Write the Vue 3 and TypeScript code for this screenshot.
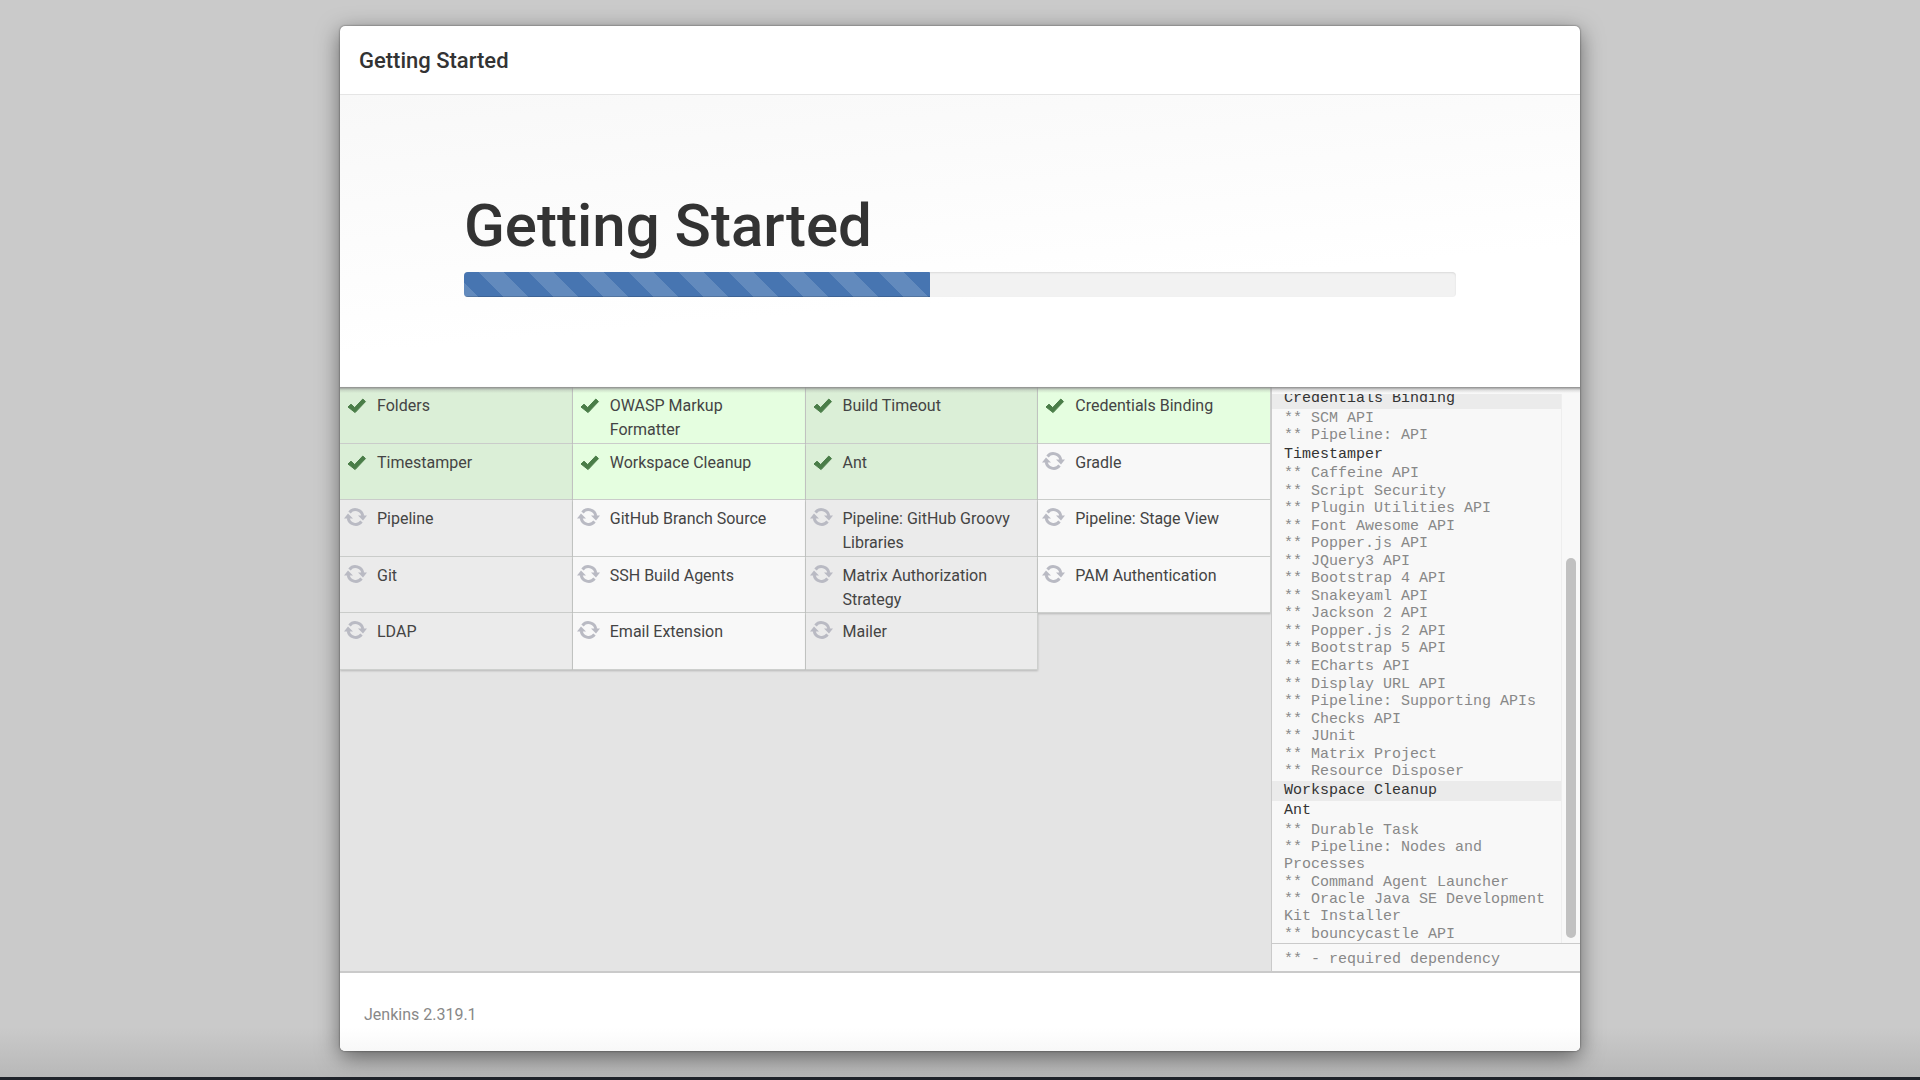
<script setup lang="ts">
type State = 'success' | 'pending'
interface Plugin { name: string; state: State }
interface LogLine { text: string; kind: 'heading' | 'dependency'; shaded?: boolean }

const plugin = (name: string, state: State = 'pending'): Plugin => ({ name, state })

const plugins: Plugin[] = [
  plugin('Folders', 'success'),
  plugin('OWASP Markup Formatter', 'success'),
  plugin('Build Timeout', 'success'),
  plugin('Credentials Binding', 'success'),
  plugin('Timestamper', 'success'),
  plugin('Workspace Cleanup', 'success'),
  plugin('Ant', 'success'),
  plugin('Gradle'),
  plugin('Pipeline'),
  plugin('GitHub Branch Source'),
  plugin('Pipeline: GitHub Groovy Libraries'),
  plugin('Pipeline: Stage View'),
  plugin('Git'),
  plugin('SSH Build Agents'),
  plugin('Matrix Authorization Strategy'),
  plugin('PAM Authentication'),
  plugin('LDAP'),
  plugin('Email Extension'),
  plugin('Mailer'),
]

const heading = (text: string, shaded = false): LogLine => ({ text, kind: 'heading', shaded })
const deps = (...names: string[]): LogLine[] =>
  names.map((n) => ({ text: `** ${n}`, kind: 'dependency' }))

const log: LogLine[] = [
  heading('Credentials Binding', true),
  ...deps('SCM API', 'Pipeline: API'),
  heading('Timestamper'),
  ...deps(
    'Caffeine API', 'Script Security', 'Plugin Utilities API', 'Font Awesome API',
    'Popper.js API', 'JQuery3 API', 'Bootstrap 4 API', 'Snakeyaml API', 'Jackson 2 API',
    'Popper.js 2 API', 'Bootstrap 5 API', 'ECharts API', 'Display URL API',
    'Pipeline: Supporting APIs', 'Checks API', 'JUnit', 'Matrix Project', 'Resource Disposer',
  ),
  heading('Workspace Cleanup', true),
  heading('Ant'),
  ...deps(
    'Durable Task', 'Pipeline: Nodes and Processes', 'Command Agent Launcher',
    'Oracle Java SE Development Kit Installer', 'bouncycastle API',
  ),
]

const progress = 47
</script>

<template>
  <div class="page">
    <main class="dialog">
      <header class="titlebar"><h4>Getting Started</h4></header>

      <section class="hero">
        <h1>Getting Started</h1>
        <div class="progress" role="progressbar" aria-label="Installation progress" :aria-valuenow="progress" aria-valuemin="0" aria-valuemax="100">
          <div class="bar" :style="{ width: progress + '%' }"></div>
        </div>
      </section>

      <section class="install">
        <div class="plugins">
          <ul class="grid">
            <li v-for="p in plugins" :key="p.name" class="plugin" :class="p.state">
              <svg v-if="p.state === 'success'" class="icon" viewBox="0 0 24 24" aria-hidden="true">
                <path d="M4 13 7 10.200 10.700 13.600 18.800 5 21.500 7.600 11.100 18.600Z" fill="#4a7d48" stroke="#4a7d48" stroke-width="1" stroke-linejoin="round" />
              </svg>
              <svg v-else class="icon" viewBox="0 0 24 24" aria-hidden="true">
                <g fill="none" stroke="#b9bac3" stroke-width="3">
                  <path d="M5.500 5.500A7.500 7.500 0 0 1 18.800 9" />
                  <path d="M17.500 14.500A7.500 7.500 0 0 1 4.200 11" />
                </g>
                <path d="M14 8.500H23L19 13.500Z M0 11.500H9L4 6.500Z" fill="#b9bac3" />
              </svg>
              <span>{{ p.name }}</span>
            </li>
          </ul>
        </div>

        <aside class="console">
          <div class="scroller">
            <div class="viewport">
              <ul class="log">
                <li v-for="line in log" :key="line.text" :class="[line.kind, { shaded: line.shaded }]">{{ line.text }}</li>
              </ul>
            </div>
            <div class="track"><div class="thumb"></div></div>
          </div>
          <p class="legend">** - required dependency</p>
        </aside>
      </section>

      <footer class="footer">Jenkins 2.319.1</footer>
    </main>
  </div>
</template>

<style>
body {
  margin: 0;
}
</style>

<style scoped>
.page {
  box-sizing: border-box;
  min-height: 100vh;
  padding: 26px 24px;
  display: flex;
  justify-content: center;
  background: linear-gradient(to bottom, #cacaca calc(100% - 50px), #b8b8b8 100%);
  border-bottom: 3px solid #20242b;
  font-family: Roboto, "Liberation Sans", sans-serif;
  color: #333;
}

.dialog {
  display: flex;
  flex-direction: column;
  width: 100%;
  max-width: 1240px;
  overflow: hidden;
  border-radius: 5px;
  background: #fff;
  box-shadow: 0 0 2px rgba(0, 0, 0, 0.6), 0 6px 22px rgba(0, 0, 0, 0.5);
}

.titlebar {
  box-sizing: border-box;
  height: 69px;
  padding: 2px 19px 0;
  display: flex;
  align-items: center;
  border-bottom: 1px solid #e5e5e5;
}

h4 {
  margin: 0;
  font-size: 22px;
  font-weight: 500;
  line-height: 28px;
}

.hero {
  box-sizing: border-box;
  height: 292px;
  padding: 97px 10% 0;
  background: linear-gradient(175deg, #f8f8f8, #fff 65%);
}

h1 {
  margin: 0 0 12px;
  font-size: 60px;
  font-weight: 500;
  line-height: 68px;
}

.progress {
  height: 25px;
  overflow: hidden;
  border-radius: 4px;
  background: #f2f2f2;
  box-shadow: inset 0 1px 2px rgba(0, 0, 0, 0.1);
}

.bar {
  height: 100%;
  background-color: #4775b1;
  background-image: linear-gradient(45deg, rgba(255, 255, 255, 0.15) 25%, transparent 25%, transparent 50%, rgba(255, 255, 255, 0.15) 50%, rgba(255, 255, 255, 0.15) 75%, transparent 75%);
  background-size: 50px 50px;
  background-position: 15px 0;
  box-shadow: inset 0 -1px 0 rgba(0, 0, 0, 0.15);
}

.install {
  position: relative;
  flex: 1;
  display: flex;
  min-height: 0;
  background: #e4e4e4;
  border-bottom: 2px solid #cacaca;
}

.install::before {
  content: "";
  position: absolute;
  inset: 0 0 auto;
  height: 6px;
  background: linear-gradient(#8c8c8c, rgba(140, 140, 140, 0.25) 50%, transparent);
}

.plugins {
  flex: 3;
}

ul {
  margin: 0;
  padding: 0;
  list-style: none;
}

.grid {
  display: grid;
  grid-template-columns: repeat(4, 1fr);
  grid-template-rows: repeat(5, 1fr);
  height: 283px;
}

.plugin {
  box-sizing: border-box;
  display: flex;
  gap: 9px;
  padding: 7px 16px 0 4px;
  border-right: 1px solid #cdcfcd;
  border-bottom: 1px solid #cdcfcd;
  background: #f8f8f8;
  box-shadow: 0 1px 2px rgba(0, 0, 0, 0.2);
  font-size: 16px;
  line-height: 24px;
  color: #444;
}

.plugin:nth-child(odd) {
  background: #ebebeb;
}

.plugin.success {
  background: #e5fee0;
}

.plugin.success:nth-child(odd) {
  background: #dbefd7;
}

.icon {
  flex: none;
  width: 24px;
  height: 24px;
  overflow: visible;
}

.console {
  box-sizing: border-box;
  flex: 0 0 309px;
  display: flex;
  flex-direction: column;
  border-left: 1px solid #cacaca;
  background: #f8f8f8;
  font-family: "Liberation Mono", monospace;
  font-size: 15px;
  line-height: 17px;
  color: #888;
}

.scroller {
  flex: 1;
  display: flex;
  min-height: 0;
  padding-top: 7px;
}

.viewport {
  flex: 1;
  display: flex;
  overflow: hidden;
}

.log {
  flex: 1;
  margin-top: -5px;
  display: flex;
  flex-direction: column;
  justify-content: space-between;
}

.log li {
  padding: 0 12px;
}

.log .heading {
  line-height: 20px;
  color: #333;
}

.log .shaded {
  background: #ebebeb;
}

.track {
  box-sizing: border-box;
  width: 19px;
  padding: 164px 4px 5px;
  border-left: 1px solid #eee;
  display: flex;
}

.thumb {
  flex: 1;
  border-radius: 5px;
  background: #c1c1c1;
}

.legend {
  margin: 0;
  padding: 7px 12px 2px;
  border-top: 1px solid #cacaca;
  line-height: 18px;
}

.footer {
  box-sizing: border-box;
  height: 78px;
  padding: 31px 24px 0;
  background: linear-gradient(#fff 70%, #f8f8f8);
  font-size: 16px;
  line-height: 22px;
  color: #888;
}
</style>
